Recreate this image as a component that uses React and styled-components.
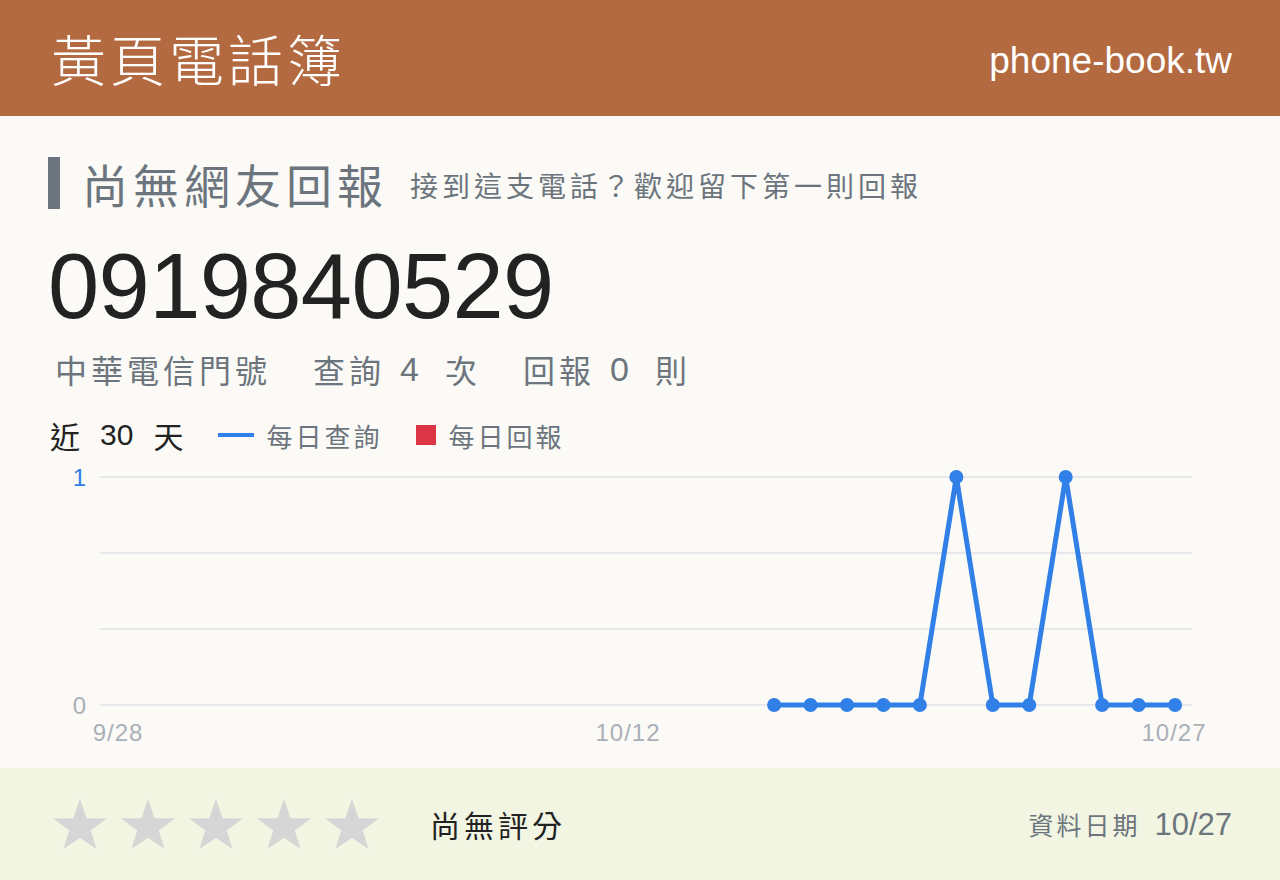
import React from "react";
import styled, { createGlobalStyle } from "styled-components";

const GlobalStyle = createGlobalStyle`
  html, body {
    margin: 0;
    padding: 0;
    background: #fbfaf6;
  }
  body {
    font-family: "Liberation Sans", "Noto Sans CJK TC", sans-serif;
    color: #222;
  }
`;

const Page = styled.div`
  width: 1280px;
  height: 880px;
  display: flex;
  flex-direction: column;
  overflow: hidden;
`;

const Header = styled.header`
  height: 116px;
  flex: none;
  background-color: #b46a40;
  display: flex;
  align-items: center;
  justify-content: space-between;
  padding: 0 48px 0 51px;
  color: #fff;
`;

const Brand = styled.div`
  font-family: "Noto Sans CJK TC", sans-serif;
  font-size: 55px;
  font-weight: 300;
  letter-spacing: 4px;
  margin-top: -2px;
`;

const Domain = styled.div`
  font-size: 37px;
  margin-top: 6px;
`;

const Main = styled.main`
  flex: 1;
  padding: 40px 48px 0;
  display: flex;
  flex-direction: column;
`;

const HeadingRow = styled.div`
  height: 54px;
  display: flex;
  align-items: center;
  color: #6c757d;
`;

const Bar = styled.span`
  width: 12px;
  height: 52px;
  background-color: #6c757d;
  margin-right: 22px;
`;

const Title = styled.h1`
  margin: 0;
  font-family: "Noto Sans CJK TC", sans-serif;
  font-weight: 400;
  font-size: 46px;
  letter-spacing: 5px;
  line-height: 1;
`;

const Subtitle = styled.span`
  margin-left: 22px;
  margin-top: 4px;
  font-size: 28px;
  letter-spacing: 4px;
`;

const Number = styled.div`
  margin-top: 19px;
  font-size: 92px;
  line-height: 114px;
  letter-spacing: -0.6px;
  color: #222;
`;

const Meta = styled.div`
  height: 44px;
  margin-top: 4px;
  display: flex;
  align-items: center;
  gap: 42px;
  padding-left: 7px;
  font-size: 32px;
  letter-spacing: 4px;
  color: #6c757d;
`;

const Group = styled.span`
  display: flex;
  align-items: center;
`;

const Count = styled.span`
  font-size: 34px;
  margin: 0 22px 0 15px;
`;

const LegendRow = styled.div`
  height: 40px;
  margin-top: 24px;
  display: flex;
  align-items: center;
  padding-left: 2px;
`;

const Range = styled.span`
  display: flex;
  align-items: center;
  gap: 20px;
  font-size: 30px;
  color: #222;
  margin-right: 35px;
`;

const Key = styled.span`
  display: flex;
  align-items: center;
  font-size: 26px;
  letter-spacing: 3px;
  color: #6c757d;
  margin-right: 34px;
`;

const Swatch = styled.span`
  width: ${(p) => (p.$line ? "36px" : "20px")};
  height: ${(p) => (p.$line ? "4px" : "20px")};
  background-color: ${(p) => p.$color};
  margin-right: 12px;
`;

const Chart = styled.svg`
  display: block;
  margin-top: 6px;
  font-family: "Liberation Sans", sans-serif;
`;

const Footer = styled.footer`
  height: 112px;
  flex: none;
  background-color: #f2f5e2;
  display: flex;
  align-items: center;
  padding: 0 48px 0 52px;
`;

const Stars = styled.div`
  display: flex;
  gap: 12px;
  margin-right: 50px;
`;

const NoRating = styled.span`
  font-size: 30px;
  letter-spacing: 4px;
  color: #222;
`;

const Updated = styled.div`
  margin-left: auto;
  display: flex;
  align-items: baseline;
  color: #6c757d;
`;

const UpdatedLabel = styled.span`
  font-size: 25px;
  letter-spacing: 3px;
  margin-right: 14px;
`;

const UpdatedDate = styled.span`
  font-size: 31px;
`;

const BLUE = "#3080e8";
const GRID = "#e6e8ec";
const AXIS = "#a9b0b8";

// daily lookups, first entry is 9/28
const daily = [
  null, null, null, null, null, null, null, null, null, null,
  null, null, null, null, null, null, null, null,
  0, 0, 0, 0, 0, 1, 0, 0, 1, 0, 0, 0,
];

const Star = () => (
  <svg width="56" height="50" viewBox="0 0 56 50">
    <polygon
      points="28,0 34.6,19.2 55,19.5 38.7,31.5 44.6,50 28,38.8 11.4,50 17.3,31.5 1,19.5 21.4,19.2"
      fill="#d5d6d5"
    />
  </svg>
);

const TrendChart = () => {
  const left = 52;
  const right = 1144;
  const x0 = 70;
  const step = 36.45;
  const yTop = 16;
  const yBottom = 244;
  const pts = daily
    .map((v, i) => (v === null ? null : [x0 + i * step, v ? yTop : yBottom]))
    .filter(Boolean);

  return (
    <Chart width="1184" height="302" viewBox="0 0 1184 302">
      {[16, 92, 168, 244].map((y) => (
        <line key={y} x1={left} x2={right} y1={y} y2={y} stroke={GRID} strokeWidth="2" />
      ))}
      <text x="38" y="25" fontSize="24" fill={BLUE} textAnchor="end">1</text>
      <text x="38" y="253" fontSize="24" fill={AXIS} textAnchor="end">0</text>
      <g fontSize="24" fill={AXIS} textAnchor="middle" letterSpacing="1">
        <text x="70" y="280">9/28</text>
        <text x="580" y="280">10/12</text>
        <text x="1126" y="280">10/27</text>
      </g>
      <polyline
        points={pts.map((p) => p.join(",")).join(" ")}
        fill="none"
        stroke={BLUE}
        strokeWidth="5"
        strokeLinejoin="round"
      />
      {pts.map(([x, y]) => (
        <circle key={x} cx={x} cy={y} r="7" fill={BLUE} />
      ))}
    </Chart>
  );
};

export default function App() {
  return (
    <Page>
      <GlobalStyle />
      <Header>
        <Brand>黃頁電話簿</Brand>
        <Domain>phone-book.tw</Domain>
      </Header>
      <Main>
        <HeadingRow>
          <Bar />
          <Title>尚無網友回報</Title>
          <Subtitle>接到這支電話？歡迎留下第一則回報</Subtitle>
        </HeadingRow>
        <Number>0919840529</Number>
        <Meta>
          <span>中華電信門號</span>
          <Group>
            查詢<Count>4</Count>次
          </Group>
          <Group>
            回報<Count>0</Count>則
          </Group>
        </Meta>
        <LegendRow>
          <Range>
            <span>近</span>
            <span>30</span>
            <span>天</span>
          </Range>
          <Key>
            <Swatch $line $color={BLUE} />
            每日查詢
          </Key>
          <Key>
            <Swatch $color="#dc3545" />
            每日回報
          </Key>
        </LegendRow>
        <TrendChart />
      </Main>
      <Footer>
        <Stars>
          {[0, 1, 2, 3, 4].map((i) => (
            <Star key={i} />
          ))}
        </Stars>
        <NoRating>尚無評分</NoRating>
        <Updated>
          <UpdatedLabel>資料日期</UpdatedLabel>
          <UpdatedDate>10/27</UpdatedDate>
        </Updated>
      </Footer>
    </Page>
  );
}
